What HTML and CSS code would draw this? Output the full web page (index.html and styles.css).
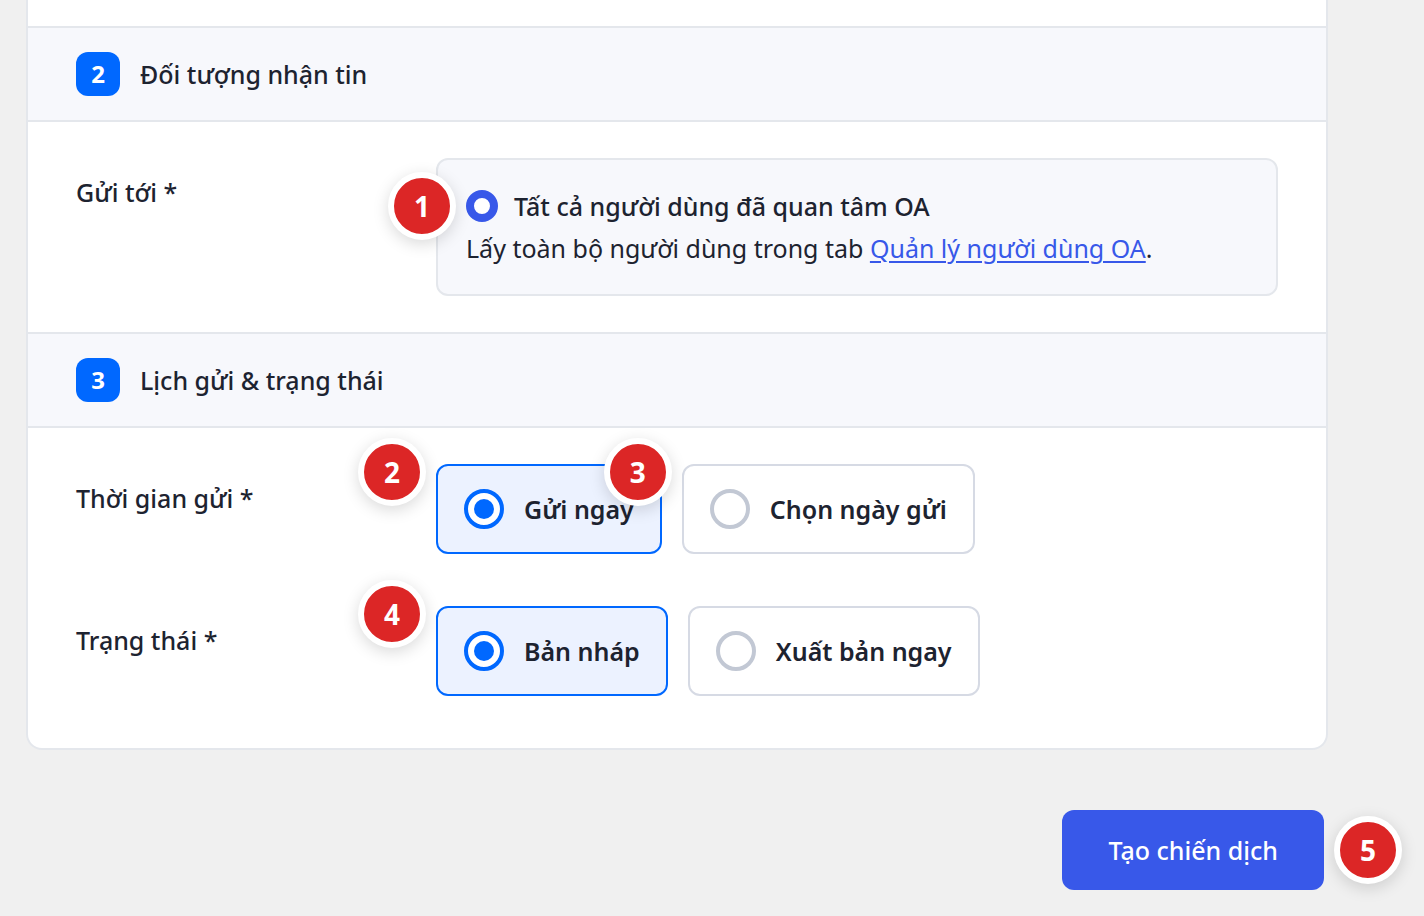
FILE: index.html
```html
<!DOCTYPE html>
<html lang="vi">
<head>
    <meta charset="UTF-8">
    <meta name="viewport" content="width=device-width, initial-scale=1.0">
    <title>Tạo chiến dịch</title>
    <link rel="stylesheet" href="styles.css">
</head>
<body>
    <form class="campaign-form">
        <div class="card">
            <section>
                <h2 class="section-header">
                    <span class="step">2</span>
                    <span>Đối tượng nhận tin</span>
                </h2>
                <div class="section-body">
                    <div class="row" role="radiogroup" aria-labelledby="sendToLabel">
                        <div class="row-label" id="sendToLabel">Gửi tới *</div>
                        <div class="audience">
                            <span class="marker marker-box">1</span>
                            <label class="audience-choice">
                                <input type="radio" class="radio-small" name="audience" checked>
                                <span>Tất cả người dùng đã quan tâm OA</span>
                            </label>
                            <p class="audience-note">Lấy toàn bộ người dùng trong tab <a href="#">Quản lý người dùng OA</a>.</p>
                        </div>
                    </div>
                </div>
            </section>

            <section>
                <h2 class="section-header">
                    <span class="step">3</span>
                    <span>Lịch gửi &amp; trạng thái</span>
                </h2>
                <div class="section-body section-body-last">
                    <div class="row" role="radiogroup" aria-labelledby="timeLabel">
                        <div class="row-label" id="timeLabel">Thời gian gửi *</div>
                        <div class="options">
                            <label class="option">
                                <span class="marker marker-option">2</span>
                                <input type="radio" class="radio" name="time" checked>
                                <span>Gửi ngay</span>
                            </label>
                            <label class="option">
                                <span class="marker marker-option">3</span>
                                <input type="radio" class="radio" name="time">
                                <span>Chọn ngày gửi</span>
                            </label>
                        </div>
                    </div>
                    <div class="row" role="radiogroup" aria-labelledby="statusLabel">
                        <div class="row-label" id="statusLabel">Trạng thái *</div>
                        <div class="options">
                            <label class="option">
                                <span class="marker marker-option">4</span>
                                <input type="radio" class="radio" name="status" checked>
                                <span>Bản nháp</span>
                            </label>
                            <label class="option">
                                <input type="radio" class="radio" name="status">
                                <span>Xuất bản ngay</span>
                            </label>
                        </div>
                    </div>
                </div>
            </section>
        </div>

        <div class="actions">
            <div class="submit-wrap">
                <button type="button" class="submit">Tạo chiến dịch</button>
                <span class="marker marker-submit">5</span>
            </div>
        </div>
    </form>
</body>
</html>
```
FILE: styles.css
```css
* {
    margin: 0;
    padding: 0;
    box-sizing: border-box;
}

body {
    font-family: 'Segoe UI', 'Noto Sans', sans-serif;
    font-size: 25px;
    line-height: 36px;
    background: #f0f0f0;
    color: #1d2330;
}

.campaign-form {
    padding: 0 96px 26px 26px;
}

.card {
    padding-top: 26px;
    background: #fff;
    border: 2px solid #e4e7ec;
    border-top: none;
    border-radius: 0 0 16px 16px;
}

.section-header {
    display: flex;
    align-items: center;
    gap: 20px;
    padding: 24px 48px;
    font-size: 25px;
    font-weight: 500;
    background: #f7f8fc;
    border-top: 2px solid #e4e7ec;
    border-bottom: 2px solid #e4e7ec;
}

.step {
    display: flex;
    align-items: center;
    justify-content: center;
    width: 44px;
    height: 44px;
    border-radius: 12px;
    background: #0068ff;
    color: #fff;
    font-size: 24px;
    font-weight: 700;
}

.section-body {
    display: flex;
    flex-direction: column;
    gap: 52px;
    padding: 36px 48px;
}

.section-body-last {
    padding-bottom: 52px;
}

.row {
    display: grid;
    grid-template-columns: 360px 1fr;
}

.row-label {
    padding-top: 16px;
    font-weight: 500;
}

.audience {
    position: relative;
    padding: 28px;
    background: #f7f8fc;
    border: 2px solid #e4e7ec;
    border-radius: 12px;
}

.audience-choice {
    display: flex;
    align-items: center;
    gap: 16px;
    margin-bottom: 6px;
    font-weight: 500;
}

.audience-note a {
    color: #3858e9;
    text-underline-offset: 3px;
    text-decoration-thickness: 2px;
}

.radio-small {
    appearance: none;
    width: 32px;
    height: 32px;
    border: 8px solid #3858e9;
    border-radius: 50%;
    background: #fff;
}

.options {
    display: flex;
    gap: 20px;
}

.option {
    position: relative;
    display: flex;
    align-items: center;
    gap: 20px;
    height: 90px;
    padding: 0 26px;
    font-weight: 600;
    white-space: nowrap;
    background: #fff;
    border: 2px solid #d6dae4;
    border-radius: 12px;
}

.option:has(:checked) {
    background: #ecf2ff;
    border-color: #0068ff;
}

.radio {
    appearance: none;
    display: grid;
    place-items: center;
    width: 40px;
    height: 40px;
    border: 4px solid #c2c8d4;
    border-radius: 50%;
    background: #fff;
}

.radio:checked {
    border-color: #0068ff;
}

.radio:checked::before {
    content: '';
    width: 20px;
    height: 20px;
    border-radius: 50%;
    background: #0068ff;
}

.actions {
    display: flex;
    justify-content: flex-end;
    padding: 60px 4px 0 0;
}

.submit-wrap {
    position: relative;
}

.submit {
    display: block;
    height: 80px;
    padding: 0 46px;
    font-family: inherit;
    font-size: 25px;
    font-weight: 500;
    color: #fff;
    background: #3858e9;
    border: none;
    border-radius: 12px;
}

/* numbered guide markers */
.marker {
    position: absolute;
    z-index: 1;
    display: flex;
    align-items: center;
    justify-content: center;
    width: 68px;
    height: 68px;
    border: 6px solid #fff;
    border-radius: 50%;
    background: #dc2626;
    box-shadow: 0 4px 16px rgba(0, 0, 0, 0.15);
    color: #fff;
    font-size: 28px;
    font-weight: 700;
}

.marker-box {
    top: 12px;
    left: -50px;
}

.marker-option {
    top: -28px;
    left: -80px;
}

.marker-submit {
    top: 6px;
    left: calc(100% + 10px);
}
```
